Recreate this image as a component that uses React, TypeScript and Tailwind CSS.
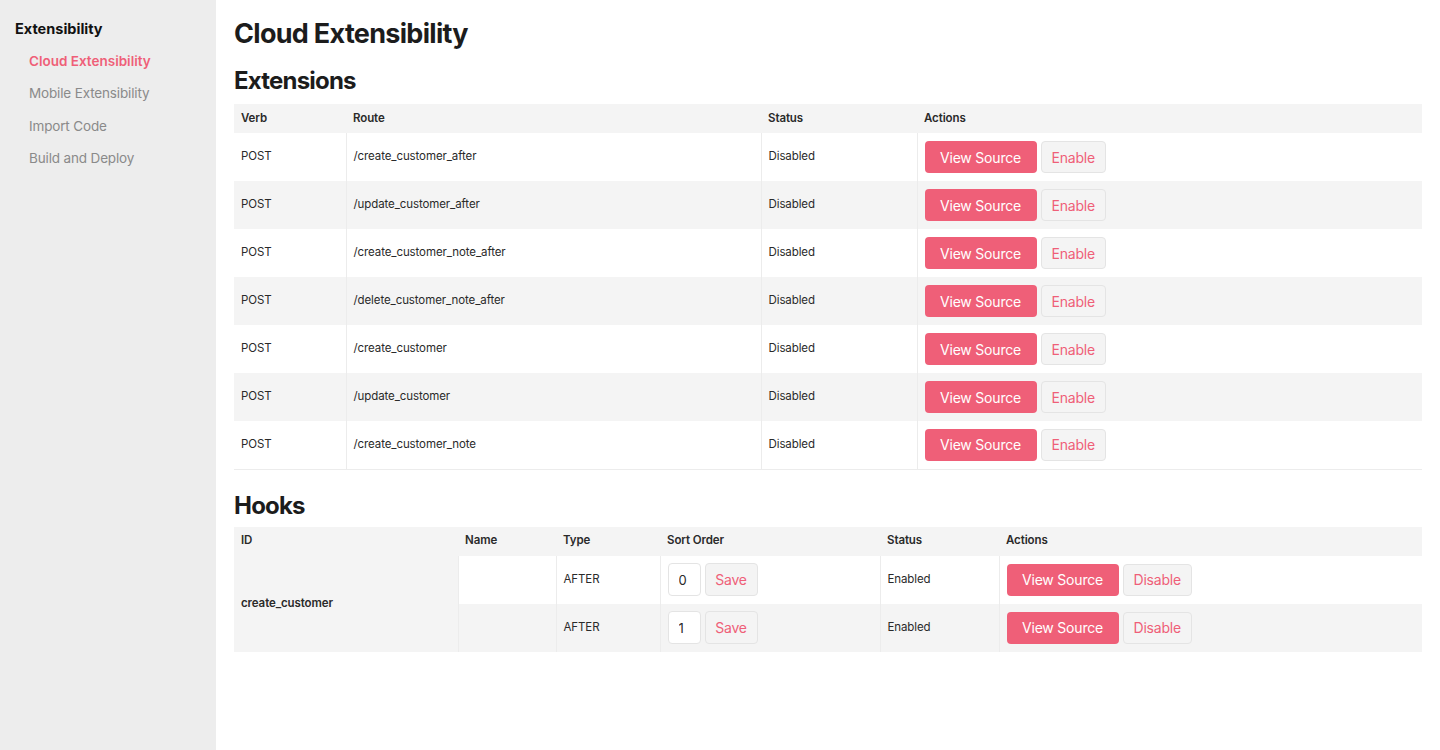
import React from 'react';

const extensions = [
  '/create_customer_after',
  '/update_customer_after',
  '/create_customer_note_after',
  '/delete_customer_note_after',
  '/create_customer',
  '/update_customer',
  '/create_customer_note',
];

const hooks = [
  { type: 'AFTER', order: '0', status: 'Enabled' },
  { type: 'AFTER', order: '1', status: 'Enabled' },
];

const navItems = ['Cloud Extensibility', 'Mobile Extensibility', 'Import Code', 'Build and Deploy'];

function PrimaryButton({ children }: { children: React.ReactNode }) {
  return (
    <button className="h-8 w-[112px] rounded-[4px] bg-[#ef5f78] text-[14px] tracking-[-0.2px] text-white">
      {children}
    </button>
  );
}

function GhostButton({ children }: { children: React.ReactNode }) {
  return (
    <button className="h-8 rounded-[4px] border border-[#e4e4e4] bg-[#f4f4f4] px-[10px] text-[14px] tracking-[-0.2px] text-[#ef5f78]">
      {children}
    </button>
  );
}

export default function App() {
  return (
    <div className="flex min-h-[750px] bg-white font-['Inter',sans-serif] text-[#2a2a2a]">
      <aside className="w-[216px] shrink-0 bg-[#ededed] px-[15px] pt-[19px]">
        <div className="text-[14.5px] font-bold leading-5 text-[#111]">Extensibility</div>
        <nav className="mt-[12px] flex flex-col gap-[12.3px] pl-[14px]">
          {navItems.map((item, i) => (
            <a
              key={item}
              className={
                i === 0
                  ? 'text-[13.5px] font-semibold leading-5 text-[#ef5f78]'
                  : 'text-[13.5px] leading-5 tracking-[-0.15px] text-[#8a8a8a]'
              }
            >
              {item}
            </a>
          ))}
        </nav>
      </aside>

      <main className="flex-1 px-[18px] pt-[16px]">
        <h1 className="text-[27px] font-bold leading-9 tracking-[-0.7px] text-[#1c1c1c]">Cloud Extensibility</h1>
        <h2 className="mt-[13px] text-[24px] font-bold leading-8 tracking-[-0.8px] text-[#1c1c1c]">Extensions</h2>

        <table className="mt-[7px] w-full border-collapse text-left text-[11.5px] tracking-[-0.1px]">
          <thead>
            <tr className="h-[29px] bg-[#f4f4f4]">
              <th className="w-[112px] px-[7px] font-semibold">Verb</th>
              <th className="w-[415px] px-[7px] font-semibold">Route</th>
              <th className="w-[156px] px-[7px] font-semibold">Status</th>
              <th className="px-[7px] font-semibold">Actions</th>
            </tr>
          </thead>
          <tbody>
            {extensions.map((route, i) => (
              <tr key={route} className={`h-12 ${i % 2 === 1 ? 'bg-[#f4f4f4]' : 'bg-white'}`}>
                <td className="border-r border-[#ececec] px-[7px]">POST</td>
                <td className="border-r border-[#ececec] px-[7px]">{route}</td>
                <td className="border-r border-[#ececec] px-[7px]">Disabled</td>
                <td className="px-[7px]">
                  <div className="flex gap-1">
                    <PrimaryButton>View Source</PrimaryButton>
                    <GhostButton>Enable</GhostButton>
                  </div>
                </td>
              </tr>
            ))}
            <tr>
              <td colSpan={4} className="h-0 border-t border-[#ececec] p-0" />
            </tr>
          </tbody>
        </table>

        <h2 className="mt-[20px] text-[24px] font-bold leading-8 tracking-[-0.8px] text-[#1c1c1c]">Hooks</h2>

        <table className="mt-[5px] w-full border-collapse text-left text-[11.5px] tracking-[-0.1px]">
          <thead>
            <tr className="h-[29px] bg-[#f4f4f4]">
              <th className="w-[224px] px-[7px] font-semibold">ID</th>
              <th className="w-[98px] px-[7px] font-semibold">Name</th>
              <th className="w-[104px] px-[7px] font-semibold">Type</th>
              <th className="w-[220px] px-[7px] font-semibold">Sort Order</th>
              <th className="w-[119px] px-[7px] font-semibold">Status</th>
              <th className="px-[7px] font-semibold">Actions</th>
            </tr>
          </thead>
          <tbody>
            {hooks.map((h, i) => (
              <tr key={i} className={`h-12 ${i % 2 === 1 ? 'bg-[#f4f4f4]' : 'bg-white'}`}>
                {i === 0 && (
                  <td rowSpan={2} className="border-r border-[#ececec] bg-[#f4f4f4] px-[7px] font-semibold">
                    create_customer
                  </td>
                )}
                <td className="border-r border-[#ececec] px-[7px]" />
                <td className="border-r border-[#ececec] px-[7px]">{h.type}</td>
                <td className="border-r border-[#ececec] px-[7px]">
                  <div className="flex gap-1">
                    <input
                      readOnly
                      value={h.order}
                      className="h-[33px] w-[33px] rounded-[4px] border border-[#e4e4e4] bg-white px-[10px] text-[13px] outline-none"
                    />
                    <button className="h-[33px] w-[53px] rounded-[4px] border border-[#e4e4e4] bg-[#f4f4f4] text-[14px] tracking-[-0.2px] text-[#ef5f78]">
                      Save
                    </button>
                  </div>
                </td>
                <td className="border-r border-[#ececec] px-[7px]">{h.status}</td>
                <td className="px-[7px]">
                  <div className="flex gap-1">
                    <PrimaryButton>View Source</PrimaryButton>
                    <GhostButton>Disable</GhostButton>
                  </div>
                </td>
              </tr>
            ))}
          </tbody>
        </table>
      </main>
    </div>
  );
}
